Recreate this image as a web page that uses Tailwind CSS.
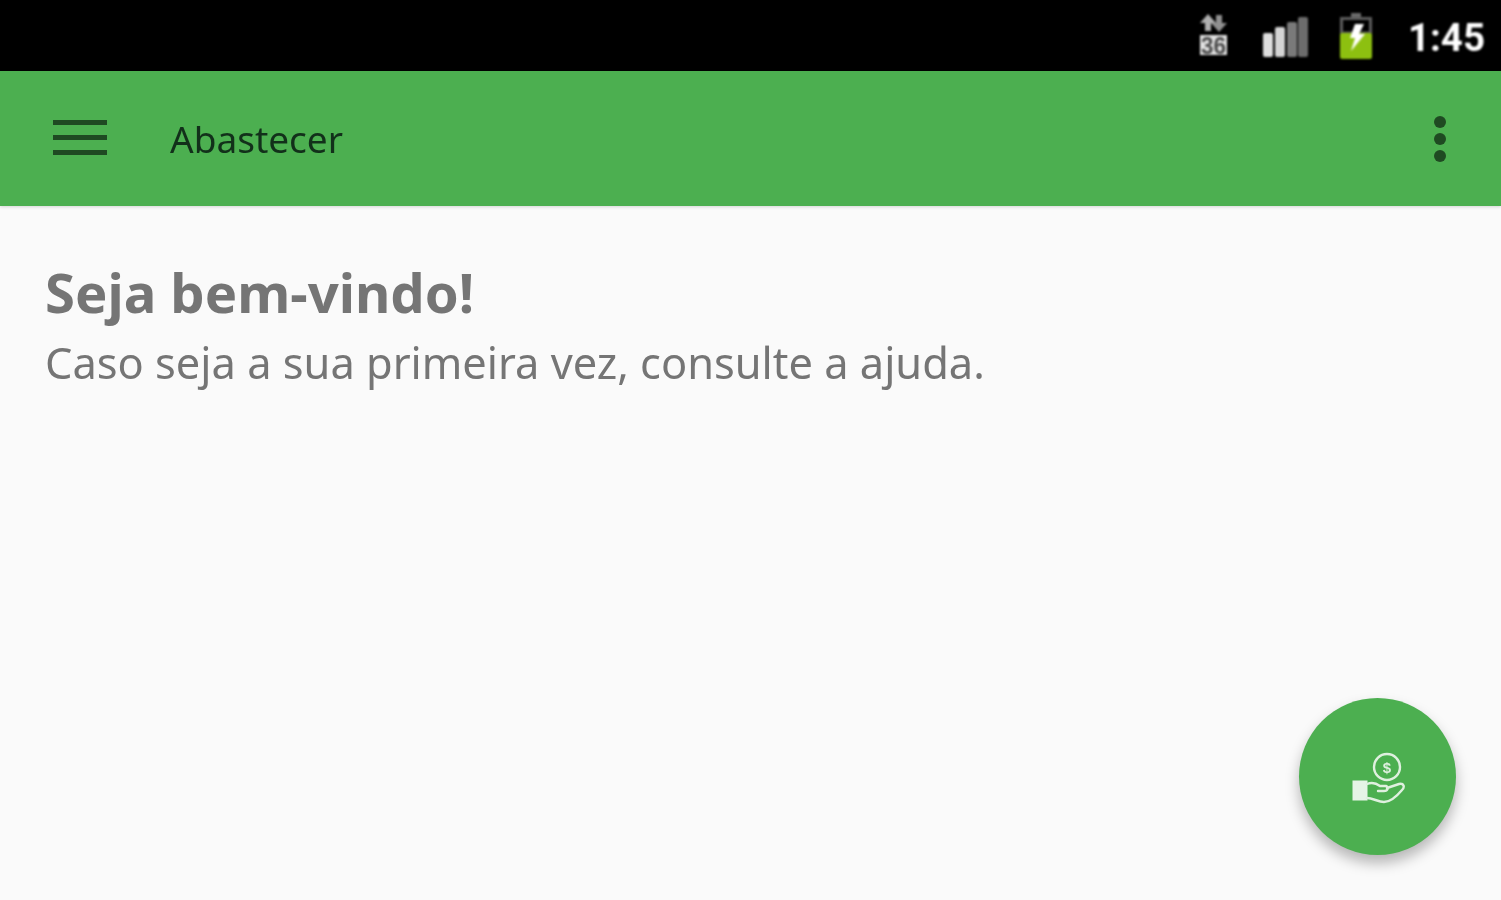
<!DOCTYPE html>
<html lang="en">

<head>
    <meta charset="UTF-8" />
    <title>Abastecer</title>
    <script src="https://cdn.jsdelivr.net/npm/@tailwindcss/browser@4"></script>
</head>

<body class="relative h-[900px] overflow-hidden bg-[#fafafa] font-['Noto_Sans',sans-serif]">

    <!-- Status bar -->
    <div class="h-[71px] bg-black flex items-center justify-end pr-[16px]">
        <div class="flex items-center blur-[1px]">
            <svg class="w-[30px] h-[44px] mr-[34px]" viewBox="0 0 30 44">
                <path d="M9 0 L1 9 H6 V17 H12 V9 H17 Z" fill="#b0b0b0" />
                <path d="M20 18 L28 9 H23 V1 H17 V9 H12 Z" fill="#909090" />
                <rect x="1" y="21" width="27" height="20" fill="#e0e0e0" />
                <text x="14.5" y="40" text-anchor="middle" font-size="23" font-weight="700" fill="#4a4a4a" font-family="Liberation Sans" textLength="25" lengthAdjust="spacingAndGlyphs">36</text>
            </svg>
            <svg class="w-[46px] h-[42px] mr-[31px] mt-[3px]" viewBox="0 0 46 42">
                <rect x="0" y="17" width="10" height="24" rx="2" fill="#dedede" />
                <rect x="12" y="11" width="10" height="30" rx="2" fill="#d4d4d4" />
                <rect x="24" y="6" width="10" height="35" rx="2" fill="#7a7a7a" />
                <rect x="35" y="1" width="10" height="40" rx="2" fill="#6c6c6c" />
            </svg>
            <svg class="w-[32px] h-[46px] mr-[36px]" viewBox="0 0 32 46">
                <rect x="11" y="0" width="10" height="5" fill="#6a6a6a" />
                <path d="M1.5 5.5 H30.5 V20 H1.5 Z" fill="none" stroke="#5c5c5c" stroke-width="3" />
                <rect x="0" y="20" width="32" height="26" rx="2" fill="#8dc010" />
                <path d="M15 11 L10 25 H15 L11 38 L25 21 H19 L24 11 Z" fill="#fff" />
            </svg>
            <span class="text-[38.5px] leading-none font-bold text-white font-['Roboto',sans-serif] mt-[6px]">1:45</span>
        </div>
    </div>

    <!-- Toolbar -->
    <header class="h-[135px] bg-[#4caf50] flex items-center pl-[53px] pr-[55px] shadow-[0_1px_3px_rgba(0,0,0,0.15)]">
        <div class="w-[54px] flex flex-col gap-[10px] mr-[63px] mb-[2px] blur-[0.5px]">
            <div class="h-[5px] bg-[#1f4a22]"></div>
            <div class="h-[5px] bg-[#1f4a22]"></div>
            <div class="h-[5px] bg-[#1f4a22]"></div>
        </div>
        <h1 class="text-[37px] leading-none text-[#12301a] blur-[0.6px]">Abastecer</h1>
        <div class="ml-auto flex flex-col gap-[5px] blur-[0.7px]">
            <div class="w-[12px] h-[12px] rounded-full bg-[#1f4a22]"></div>
            <div class="w-[12px] h-[12px] rounded-full bg-[#1f4a22]"></div>
            <div class="w-[12px] h-[12px] rounded-full bg-[#1f4a22]"></div>
        </div>
    </header>

    <!-- Content -->
    <main class="pt-[55px] pl-[45px] text-[#757575] blur-[0.6px]">
        <h2 class="text-[54.4px] leading-[62px] font-bold">Seja bem-vindo!</h2>
        <p class="mt-[14px] text-[43.4px] leading-[52px]">Caso seja a sua primeira vez, consulte a ajuda.</p>
    </main>

    <!-- FAB -->
    <button class="absolute left-[1299px] top-[698px] w-[157px] h-[157px] rounded-full bg-[#4caf50] shadow-[0_8px_14px_rgba(0,0,0,0.28)] flex items-center justify-center">
        <svg class="w-[54px] h-[54px] blur-[0.6px]" viewBox="0 0 54 54" fill="none" stroke="#dff0df" stroke-width="2.4">
            <circle cx="36" cy="17" r="13" />
            <text x="36" y="22.5" text-anchor="middle" font-size="15" font-weight="700" font-family="Liberation Sans" fill="#dff0df" stroke="none">$</text>
            <rect x="1.5" y="30.5" width="15" height="20" fill="#e6f4e6" stroke="none" />
            <path d="M16 34 C21 32 25 33 29 36 H35 C38 37 37 41 33 41 H27 M36 38 L48 34 C53 33 54 37 51 40 C46 46 40 52 33 52 C27 52 22 48 16 48" stroke-linecap="round" />
        </svg>
    </button>

</body>

</html>
